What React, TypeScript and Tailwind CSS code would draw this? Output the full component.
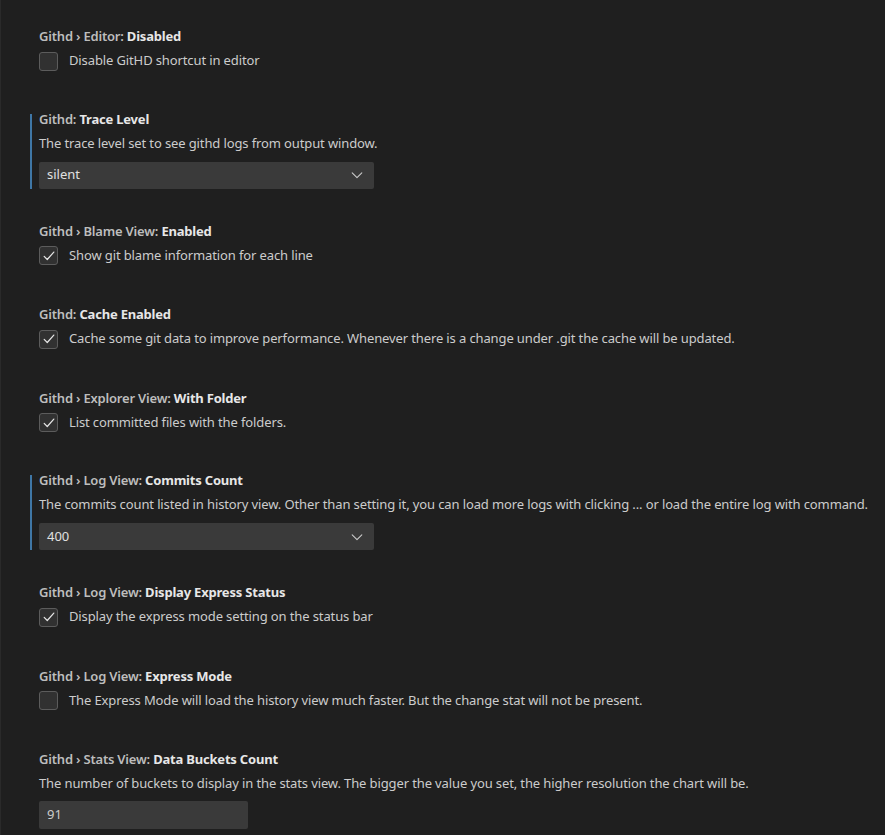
import React from "react";

const font = { fontFamily: '"Noto Sans", "Open Sans", sans-serif' };

function Title({ cat, label }: { cat: string; label: string }) {
  return (
    <div className="h-[18px] leading-[18px] text-[13px] whitespace-nowrap tracking-[-0.2px]">
      <span className="font-semibold text-[#bdbdbd]">{cat}</span>
      <span className="font-bold text-[#e7e7e7]">{label}</span>
    </div>
  );
}

function Check() {
  return (
    <svg width="14" height="14" viewBox="0 0 16 16" fill="none">
      <path d="M2.5 8.5 L6 12 L13.5 3.5" stroke="#e6e6e6" strokeWidth="1.4" strokeLinecap="round" strokeLinejoin="round" />
    </svg>
  );
}

function CheckItem({ cat, label, desc, checked }: { cat: string; label: string; desc: string; checked: boolean }) {
  return (
    <div className="relative pl-[38px] pt-3 h-[83.5px]">
      <Title cat={cat} label={label} />
      <div className="mt-[6px] flex items-center h-[18px] gap-[11px] translate-y-[1px]">
        <div className="w-[19px] h-[19px] rounded-[3px] border border-[#5c5c5c] bg-[#313131] flex items-center justify-center shrink-0">
          {checked && <Check />}
        </div>
        <span className="text-[13px] text-[#cccccc] whitespace-nowrap tracking-[-0.12px]">{desc}</span>
      </div>
    </div>
  );
}

function Chevron() {
  return (
    <svg width="14" height="14" viewBox="0 0 16 16" fill="none">
      <path d="M2.5 5.5 L8 11 L13.5 5.5" stroke="#cccccc" strokeWidth="1.2" strokeLinecap="round" strokeLinejoin="round" />
    </svg>
  );
}

function SelectItem({ cat, label, desc, value }: { cat: string; label: string; desc: string; value: string }) {
  return (
    <div className="relative pl-[38px] pt-[11px] h-[111px]">
      <div className="absolute left-[29px] top-[15px] h-[75px] w-[2px] bg-[#3f77a6]" />
      <Title cat={cat} label={label} />
      <div className="mt-[6px] h-[18px] leading-[18px] text-[13px] text-[#cccccc] whitespace-nowrap tracking-[-0.12px]">{desc}</div>
      <div className="mt-[10px] h-[27px] w-[335px] rounded-[2px] bg-[#3a3a3a] flex items-center justify-between pl-[8px] pr-[10px]">
        <span className="text-[13px] text-[#e0e0e0]">{value}</span>
        <Chevron />
      </div>
    </div>
  );
}

export default function App() {
  return (
    <div className="w-[885px] h-[835px] bg-[#1f1f1f] overflow-hidden border-l border-[#2a2a2a] pt-[15px]" style={font}>
      <CheckItem cat="Githd › Editor: " label="Disabled" desc="Disable GitHD shortcut in editor" checked={false} />
      <SelectItem cat="Githd: " label="Trace Level" desc="The trace level set to see githd logs from output window." value="silent" />
      <CheckItem cat="Githd › Blame View: " label="Enabled" desc="Show git blame information for each line" checked />
      <CheckItem cat="Githd: " label="Cache Enabled" desc="Cache some git data to improve performance. Whenever there is a change under .git the cache will be updated." checked />
      <CheckItem cat="Githd › Explorer View: " label="With Folder" desc="List committed files with the folders." checked />
      <SelectItem cat="Githd › Log View: " label="Commits Count" desc="The commits count listed in history view. Other than setting it, you can load more logs with clicking ... or load the entire log with command." value="400" />
      <CheckItem cat="Githd › Log View: " label="Display Express Status" desc="Display the express mode setting on the status bar" checked />
      <CheckItem cat="Githd › Log View: " label="Express Mode" desc="The Express Mode will load the history view much faster. But the change stat will not be present." checked={false} />
      <div className="relative pl-[38px] pt-3">
        <Title cat="Githd › Stats View: " label="Data Buckets Count" />
        <div className="mt-[6px] h-[18px] leading-[18px] text-[13px] text-[#cccccc] whitespace-nowrap tracking-[-0.12px]">
          The number of buckets to display in the stats view. The bigger the value you set, the higher resolution the chart will be.
        </div>
        <div className="mt-[9px] h-[28px] w-[209px] rounded-[2px] bg-[#3a3a3a] flex items-center pl-[8px]">
          <span className="text-[13px] text-[#cccccc]">91</span>
        </div>
      </div>
    </div>
  );
}
